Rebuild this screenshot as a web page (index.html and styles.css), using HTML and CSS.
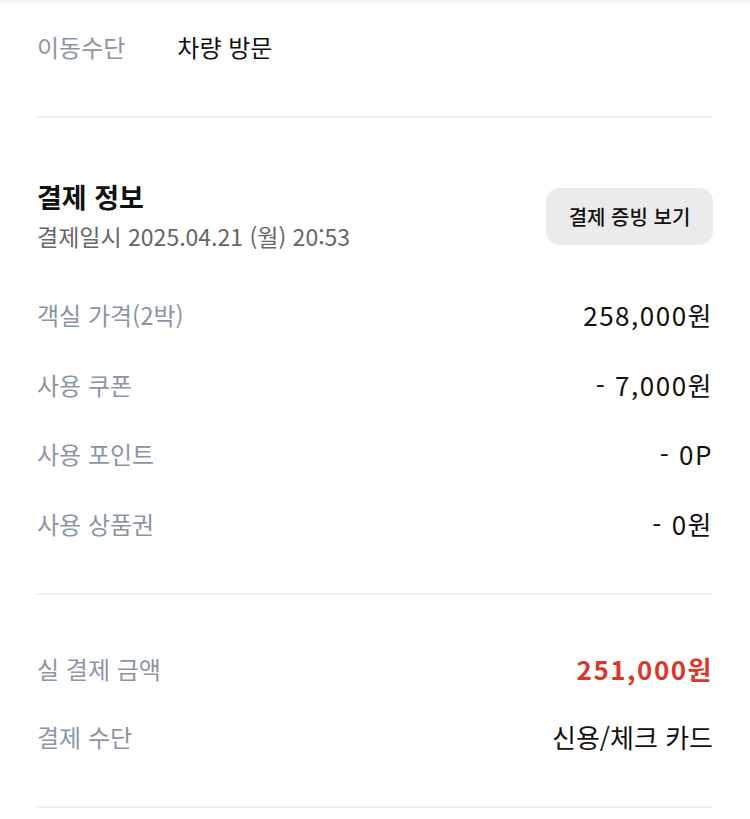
FILE: index.html
```html
<!DOCTYPE html>
<html lang="ko">
<head>
  <meta charset="UTF-8" />
  <meta name="viewport" content="width=device-width, initial-scale=1.0"/>
  <title>예약 상세</title>
  <link rel="stylesheet" href="styles.css">
</head>
<body>
  <div class="page">
    <div class="section visit">
      <div class="visit-row">
        <span class="label">이동수단</span>
        <span class="visit-value">차량 방문</span>
      </div>
    </div>

    <div class="section pay">
      <div class="pay-header">
        <div>
          <h2 class="pay-title">결제 정보</h2>
          <div class="pay-date">결제일시 2025.04.21 (월) 20:53</div>
        </div>
        <button class="receipt-btn">결제 증빙 보기</button>
      </div>

      <div class="row"><span class="label">객실 가격(2박)</span><span class="value num">258,000원</span></div>
      <div class="row"><span class="label">사용 쿠폰</span><span class="value num">- 7,000원</span></div>
      <div class="row"><span class="label">사용 포인트</span><span class="value num">- 0P</span></div>
      <div class="row"><span class="label">사용 상품권</span><span class="value num">- 0원</span></div>
    </div>

    <div class="section total">
      <div class="row"><span class="label">실 결제 금액</span><span class="value num price">251,000원</span></div>
      <div class="row"><span class="label">결제 수단</span><span class="value">신용/체크 카드</span></div>
    </div>
  </div>
</body>
</html>
```

FILE: styles.css
```css
body {
  margin: 0;
  padding: 0;
  font-family: "Noto Sans CJK KR", "Noto Sans", sans-serif;
  background-color: #fff;
  color: #111;
}
.page {
  padding-top: 14px;
  border-top: 3px solid #f7f7f7;
}
.section {
  margin: 0 37px;
  border-bottom: 2px solid #f1f1f1;
}
.visit {
  padding: 13px 0 54px;
}
.visit-row {
  display: flex;
  align-items: center;
  height: 32px;
}
.visit-value {
  margin-left: 52px;
  font-size: 24px;
  color: #111;
}
.label {
  color: #8b96a2;
  font-size: 24px;
}
.pay {
  padding: 63px 0 35px;
}
.pay-header {
  display: flex;
  justify-content: space-between;
  align-items: center;
  margin-bottom: 29px;
}
.pay-title {
  margin: 0;
  font-size: 27px;
  font-weight: 700;
  line-height: 32px;
}
.pay-date {
  margin-top: 8px;
  font-size: 23px;
  line-height: 30px;
  color: #666;
}
.receipt-btn {
  width: 167px;
  height: 57px;
  border: none;
  border-radius: 14px;
  background-color: #ebebeb;
  color: #111;
  font-family: inherit;
  font-size: 20px;
  font-weight: 500;
}
.row {
  display: flex;
  justify-content: space-between;
  align-items: center;
  height: 69.5px;
}
.value {
  font-size: 26px;
  color: #111;
}
.num {
  letter-spacing: 1.5px;
}
.total {
  padding: 39px 0 36px;
}
.total .row {
  height: 68px;
}
.price {
  color: #d8392f;
  font-weight: 700;
}
```
